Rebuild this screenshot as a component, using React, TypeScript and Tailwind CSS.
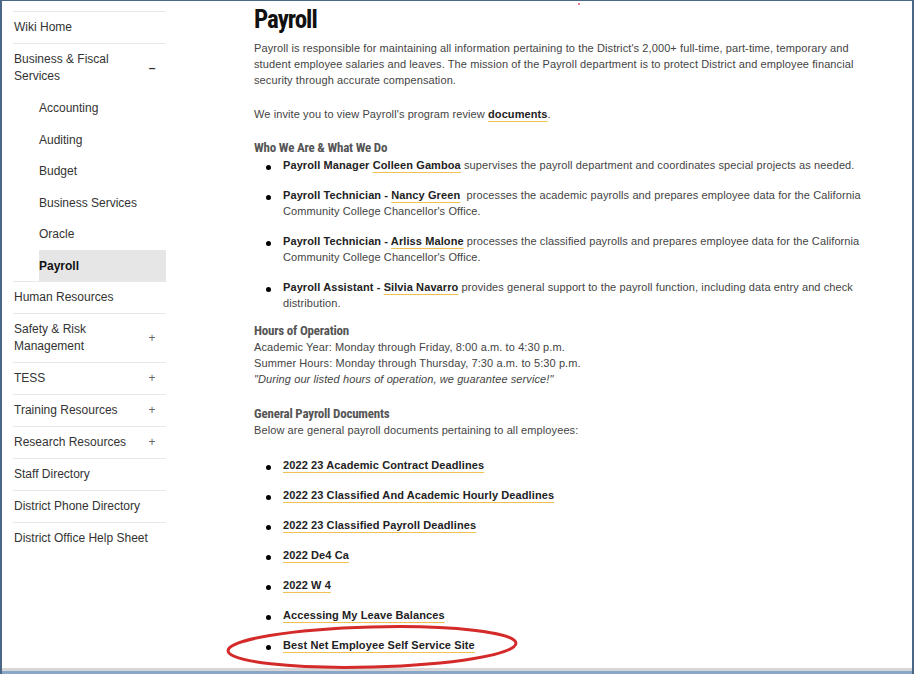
const sideItems: { label: string[]; icon?: string }[] = [
  { label: ["Human Resources"] },
  { label: ["Safety & Risk", "Management"], icon: "+" },
  { label: ["TESS"], icon: "+" },
  { label: ["Training Resources"], icon: "+" },
  { label: ["Research Resources"], icon: "+" },
  { label: ["Staff Directory"] },
  { label: ["District Phone Directory"] },
  { label: ["District Office Help Sheet"] },
];

const subItems = ["Accounting", "Auditing", "Budget", "Business Services", "Oracle"];

const docs = [
  "2022 23 Academic Contract Deadlines",
  "2022 23 Classified And Academic Hourly Deadlines",
  "2022 23 Classified Payroll Deadlines",
  "2022 De4 Ca",
  "2022 W 4",
  "Accessing My Leave Balances",
  "Best Net Employee Self Service Site",
];

const cond = "font-['Roboto_Condensed','Liberation_Sans_Narrow','DejaVu_Sans_Condensed',sans-serif]";

function Link({ children }: { children: React.ReactNode }) {
  return (
    <span className="font-bold text-[#222] underline decoration-[#f0c050] decoration-1 underline-offset-[3px]">
      {children}
    </span>
  );
}

function Bullet({ children }: { children: React.ReactNode }) {
  return (
    <li className="relative mb-[14px] pl-[29px]">
      <span className="absolute left-[12px] top-[8px] h-[5px] w-[5px] rounded-full bg-black" />
      {children}
    </li>
  );
}

function Sidebar() {
  return (
    <nav className="ml-[11px] mt-[10px] w-[153px] text-[12px] leading-[17px] text-[#333]">
      <div className="border-t border-[#e8e8e8] pl-[1px] pt-[7px] pb-[7px]">Wiki Home</div>
      <div className="border-t border-[#e8e8e8]">
        <div className="flex items-center justify-between pl-[1px] pr-[4px] pt-[7px] pb-[7px]">
          <span>
            Business &amp; Fiscal
            <br />
            Services
          </span>
          <span className="w-[20px] text-center font-bold">–</span>
        </div>
        <div className="ml-[26px]">
          {subItems.map((s) => (
            <div key={s} className="pt-[8px] pb-[6.5px]">
              {s}
            </div>
          ))}
          <div className="bg-[#e6e6e6] pt-[8px] pb-[6.5px] font-bold text-[#111]">Payroll</div>
        </div>
      </div>
      {sideItems.map((it) => (
        <div
          key={it.label[0]}
          className="flex items-center justify-between border-t border-[#e8e8e8] pl-[1px] pr-[4px] pt-[7px] pb-[7px]"
        >
          <span>
            {it.label.map((l, i) => (
              <span key={l}>
                {i > 0 && <br />}
                {l}
              </span>
            ))}
          </span>
          {it.icon && <span className="w-[20px] text-center text-[#666]">{it.icon}</span>}
        </div>
      ))}
    </nav>
  );
}

export default function App() {
  return (
    <div className="relative flex h-[674px] w-[914px] flex-col overflow-hidden border-x-2 border-t border-[#4a6785] bg-white font-['Liberation_Sans',Arial,sans-serif]">
      <div className="flex flex-1">
        <Sidebar />
        <main className="ml-[88px] w-[620px] pt-[5px] text-[11px] leading-[16px] tracking-[0.1px] text-[#444]">
          <h1 className={`${cond} text-[25px] font-bold leading-[28px] tracking-[-1px] text-[#111]`}>Payroll</h1>
          <p className="mt-[6px] pr-[20px]">
            Payroll is responsible for maintaining all information pertaining to the District's 2,000+ full-time, part-time, temporary and
            student employee salaries and leaves. The mission of the Payroll department is to protect District and employee financial
            security through accurate compensation.
          </p>
          <p className="mt-[18px]">
            We invite you to view Payroll's program review <Link>documents</Link>.
          </p>
          <h3 className={`${cond} mt-[17px] text-[13px] font-bold leading-[18px] tracking-[-0.2px] text-[#555]`}>
            Who We Are &amp; What We Do
          </h3>
          <ul>
            <Bullet>
              <b className="text-[#222]">Payroll Manager</b> <Link>Colleen Gamboa</Link> supervises the payroll department and coordinates special projects as needed.
            </Bullet>
            <Bullet>
              <b className="text-[#222]">Payroll Technician - </b>
              <Link>Nancy Green</Link>&nbsp; processes the academic payrolls and prepares employee data for the California Community College Chancellor's Office.
            </Bullet>
            <Bullet>
              <b className="text-[#222]">Payroll Technician - </b>
              <Link>Arliss Malone</Link> processes the classified payrolls and prepares employee data for the California Community College Chancellor's Office.
            </Bullet>
            <Bullet>
              <b className="text-[#222]">Payroll Assistant - </b>
              <Link>Silvia Navarro</Link> provides general support to the payroll function, including data entry and check distribution.
            </Bullet>
          </ul>
          <h3 className={`${cond} -mt-[3px] text-[13px] font-bold leading-[17px] tracking-[-0.2px] text-[#555]`}>Hours of Operation</h3>
          <p>
            Academic Year: Monday through Friday, 8:00 a.m. to 4:30 p.m.
            <br />
            Summer Hours: Monday through Thursday, 7:30 a.m. to 5:30 p.m.
            <br />
            <i>"During our listed hours of operation, we guarantee service!"</i>
          </p>
          <h3 className={`${cond} mt-[18px] text-[13px] font-bold leading-[17px] tracking-[-0.2px] text-[#555]`}>
            General Payroll Documents
          </h3>
          <p>Below are general payroll documents pertaining to all employees:</p>
          <ul className="mt-[19px]">
            {docs.map((d) => (
              <Bullet key={d}>
                <Link>{d}</Link>
              </Bullet>
            ))}
          </ul>
        </main>
      </div>
      <div className="h-[3px] bg-[#d6d6d6]" />
      <div className="h-[3px] bg-[#8aa6c8]" />
      <span className="absolute left-[576px] top-[2px] h-[2px] w-[2px] rounded-full bg-[#e05060]" />
      <svg className="absolute left-[222px] top-[622px]" width="298" height="50" viewBox="0 0 298 50">
        <ellipse cx="148" cy="24" rx="144" ry="20" fill="none" stroke="#d42a2a" strokeWidth="3" transform="rotate(-1.5 148 24)" />
      </svg>
    </div>
  );
}
